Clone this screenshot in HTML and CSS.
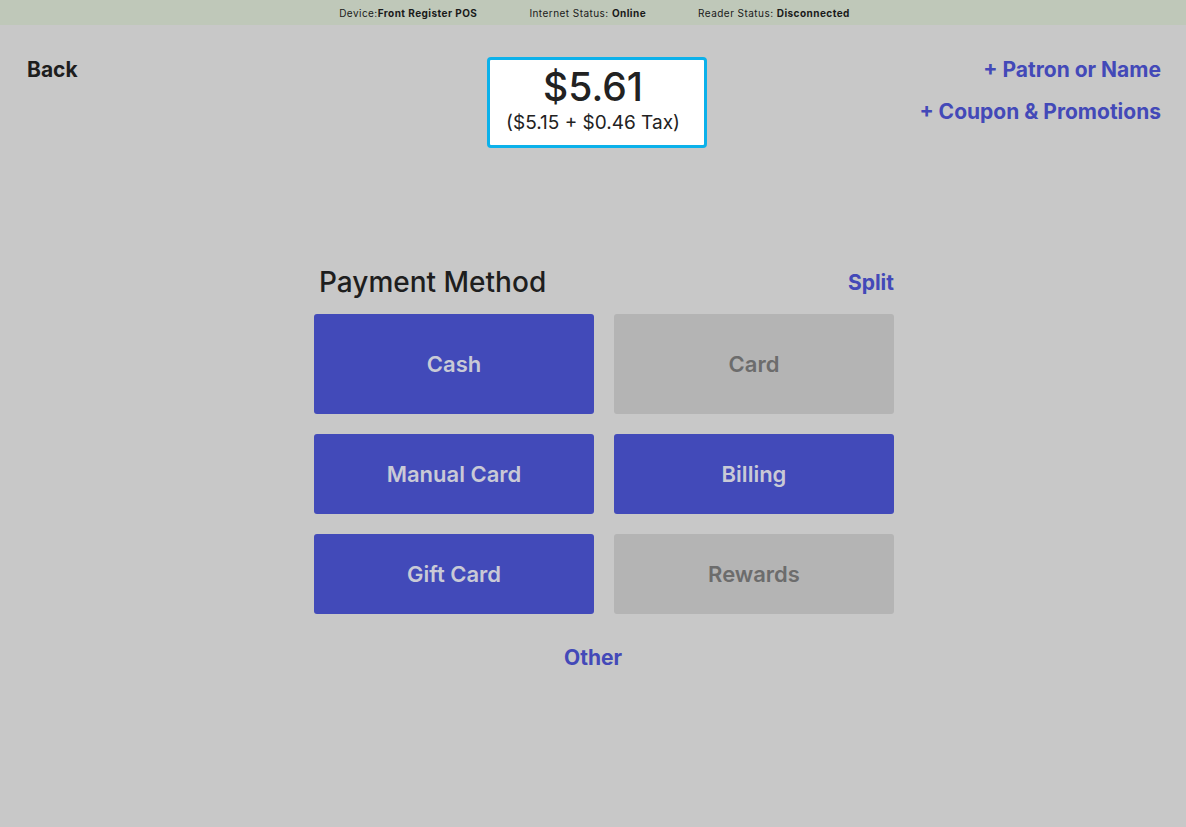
FILE: index.html
```html
<!DOCTYPE html>
<html lang="en">
<head>
<meta charset="utf-8">
<title>Payment</title>
<link rel="stylesheet" href="styles.css">
</head>
<body>
<div class="status-bar">
  <span class="status-item">Device:<b>Front Register POS</b></span>
  <span class="status-item">Internet Status: <b>Online</b></span>
  <span class="status-item">Reader Status: <b>Disconnected</b></span>
</div>
<div class="header">
  <div class="header-left"><a class="back">Back</a></div>
  <div class="header-center">
    <div class="amount-box">
      <div class="amount-total">$5.61</div>
      <div class="amount-detail">($5.15 + $0.46 Tax)</div>
    </div>
  </div>
  <div class="header-right">
    <a class="link">+ Patron or Name</a>
    <a class="link">+ Coupon &amp; Promotions</a>
  </div>
</div>
<div class="payment">
  <div class="payment-head">
    <h2 class="payment-title">Payment Method</h2>
    <a class="link">Split</a>
  </div>
  <div class="method-grid">
    <button class="method method-tall">Cash</button>
    <button class="method method-tall method-disabled">Card</button>
    <button class="method">Manual Card</button>
    <button class="method">Billing</button>
    <button class="method">Gift Card</button>
    <button class="method method-disabled">Rewards</button>
  </div>
</div>
<div class="other-row"><a class="link">Other</a></div>
</body>
</html>
```

FILE: styles.css
```css
html, body {
  margin: 0;
  padding: 0;
}
body {
  background: #c8c8c8;
  font-family: Inter, "Noto Sans", sans-serif;
  color: #1e1e1e;
  width: 1186px;
  min-height: 827px;
}
.status-bar {
  height: 25px;
  background: #bfc8b9;
  display: flex;
  justify-content: center;
  align-items: center;
  gap: 52px;
  font-size: 10px;
  letter-spacing: 0.45px;
  color: #1a1a1a;
  padding-left: 3px;
}
.status-item b {
  font-weight: 700;
}
.header {
  display: flex;
  justify-content: space-between;
  align-items: flex-start;
  margin-top: 32px;
  padding: 0 25px 0 27px;
}
.header-left, .header-right {
  width: 300px;
}
.header-left {
  display: flex;
}
.back {
  font-size: 21px;
  font-weight: 700;
  line-height: 25px;
  color: #1e1e1e;
}
.header-center {
  display: flex;
  justify-content: center;
  padding-left: 6px;
}
.amount-box {
  width: 220px;
  box-sizing: border-box;
  background: #ffffff;
  border: 3px solid #0cb1ea;
  border-radius: 4px;
  padding: 4px 8px 11px 0;
  text-align: center;
  color: #222222;
}
.amount-total {
  font-size: 39px;
  font-weight: 500;
  line-height: 46px;
}
.amount-detail {
  font-size: 19px;
  line-height: 22px;
  margin-top: 2px;
}
.header-right {
  display: flex;
  flex-direction: column;
  align-items: flex-end;
  gap: 17px;
}
.link {
  font-size: 21px;
  font-weight: 700;
  line-height: 25px;
  color: #4349b8;
  cursor: pointer;
}
.payment {
  width: 580px;
  margin-left: calc(50% - 279px);
  margin-top: 118px;
}
.payment-head {
  display: flex;
  justify-content: space-between;
  align-items: center;
  padding-left: 5px;
  height: 32px;
}
.payment-title {
  margin: 0;
  font-size: 28px;
  font-weight: 500;
  line-height: 32px;
  color: #1e1e1e;
}
.method-grid {
  margin-top: 16px;
  display: grid;
  grid-template-columns: 280px 280px;
  gap: 20px;
}
.method {
  height: 80px;
  border: none;
  border-radius: 3px;
  background: #424ab9;
  color: #c9cad6;
  font-family: Inter, "Noto Sans", sans-serif;
  font-size: 22px;
  font-weight: 600;
  padding: 0;
}
.method-tall {
  height: 100px;
}
.method-disabled {
  background: #b4b4b4;
  color: #6c6c6c;
}
.other-row {
  display: flex;
  justify-content: center;
  margin-top: 31px;
}
```
